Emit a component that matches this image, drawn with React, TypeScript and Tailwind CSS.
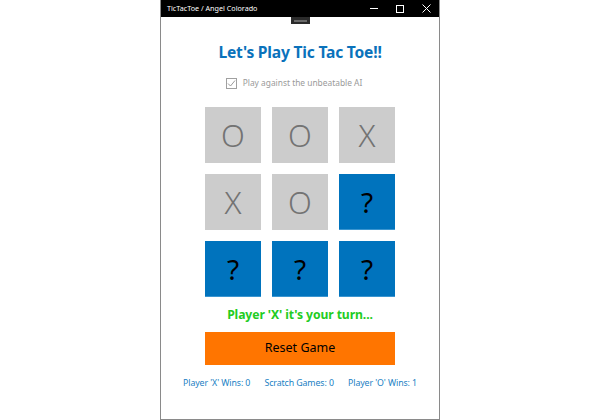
import React from "react";

const cells: { v: string; open: boolean }[] = [
  { v: "O", open: false },
  { v: "O", open: false },
  { v: "X", open: false },
  { v: "X", open: false },
  { v: "O", open: false },
  { v: "?", open: true },
  { v: "?", open: true },
  { v: "?", open: true },
  { v: "?", open: true },
];

export default function App() {
  return (
    <div
      className="w-[600px] h-[420px] bg-white flex justify-center"
      style={{ fontFamily: '"Noto Sans", "Open Sans", sans-serif' }}
    >
      <div className="w-[280px] h-[420px] border-x border-b border-[#8a8a8a] flex flex-col">
        {/* title bar */}
        <div className="h-[17px] bg-black flex items-center text-white shrink-0">
          <span className="ml-[6px] text-[7.2px] leading-none">TicTacToe / Angel Colorado</span>
          <div className="ml-auto flex items-center h-full">
            <div className="w-[26px] flex justify-center">
              <div className="w-[8px] h-px bg-white" />
            </div>
            <div className="w-[26px] flex justify-center">
              <div className="w-[8px] h-[8px] border border-white" />
            </div>
            <div className="w-[26px] flex justify-center">
              <svg width="9" height="9" viewBox="0 0 9 9">
                <path d="M0.5 0.5 L8.5 8.5 M8.5 0.5 L0.5 8.5" stroke="white" strokeWidth="1" />
              </svg>
            </div>
          </div>
        </div>
        {/* body */}
        <div className="flex-1 relative flex flex-col items-center">
          <div className="absolute left-[130px] top-0 w-[19px] h-[7px] bg-[#2b2b2b] flex items-center justify-center">
            <div className="w-[13px] h-[2px] bg-[#6a6a6a]" />
          </div>
          <div className="mt-[24px] text-[15.6px] leading-[22px] font-bold text-[#0a72bb] tracking-[-0.2px]">
            Let's Play Tic Tac Toe!!
          </div>
          <div className="mt-[15px] mr-[12px] h-[11px] flex items-center gap-[6px] text-[8.4px] text-[#9a9a9a] leading-none">
            <div className="w-[11px] h-[11px] border border-[#a0a0a0] flex items-center justify-center">
              <svg width="9" height="9" viewBox="0 0 9 9">
                <path d="M1 4.5 L3.5 7 L8 1.5" stroke="#9a9a9a" strokeWidth="1" fill="none" />
              </svg>
            </div>
            <span>Play against the unbeatable AI</span>
          </div>
          <div className="mt-[18px] grid grid-cols-[56px_56px_56px] grid-rows-[56px_56px_56px] gap-[11px]">
            {cells.map((c, i) =>
              c.open ? (
                <div
                  key={i}
                  className="w-[56px] h-[56px] bg-[#0073bd] border-b border-[#3a95d0] flex items-center justify-center text-black text-[28px] leading-none"
                >
                  {c.v}
                </div>
              ) : (
                <div
                  key={i}
                  className="w-[56px] h-[56px] bg-[#cccccc] flex items-center justify-center text-[#737373] text-[31px] font-light leading-none"
                >
                  {c.v}
                </div>
              )
            )}
          </div>
          <div className="mt-[9px] text-[12.2px] font-bold text-[#22cc22] leading-[18px] tracking-[-0.1px]">
            Player 'X' it's your turn...
          </div>
          <button className="mt-[8px] w-[190px] h-[33px] bg-[#ff7500] text-[12.5px] text-black flex items-center justify-center">
            Reset Game
          </button>
          <div className="mt-[13px] w-full flex justify-between px-[22px] text-[8.8px] text-[#1a7fc4] leading-[10px] tracking-[-0.1px]">
            <span>Player 'X' Wins: 0</span>
            <span>Scratch Games: 0</span>
            <span>Player 'O' Wins: 1</span>
          </div>
        </div>
      </div>
    </div>
  );
}
